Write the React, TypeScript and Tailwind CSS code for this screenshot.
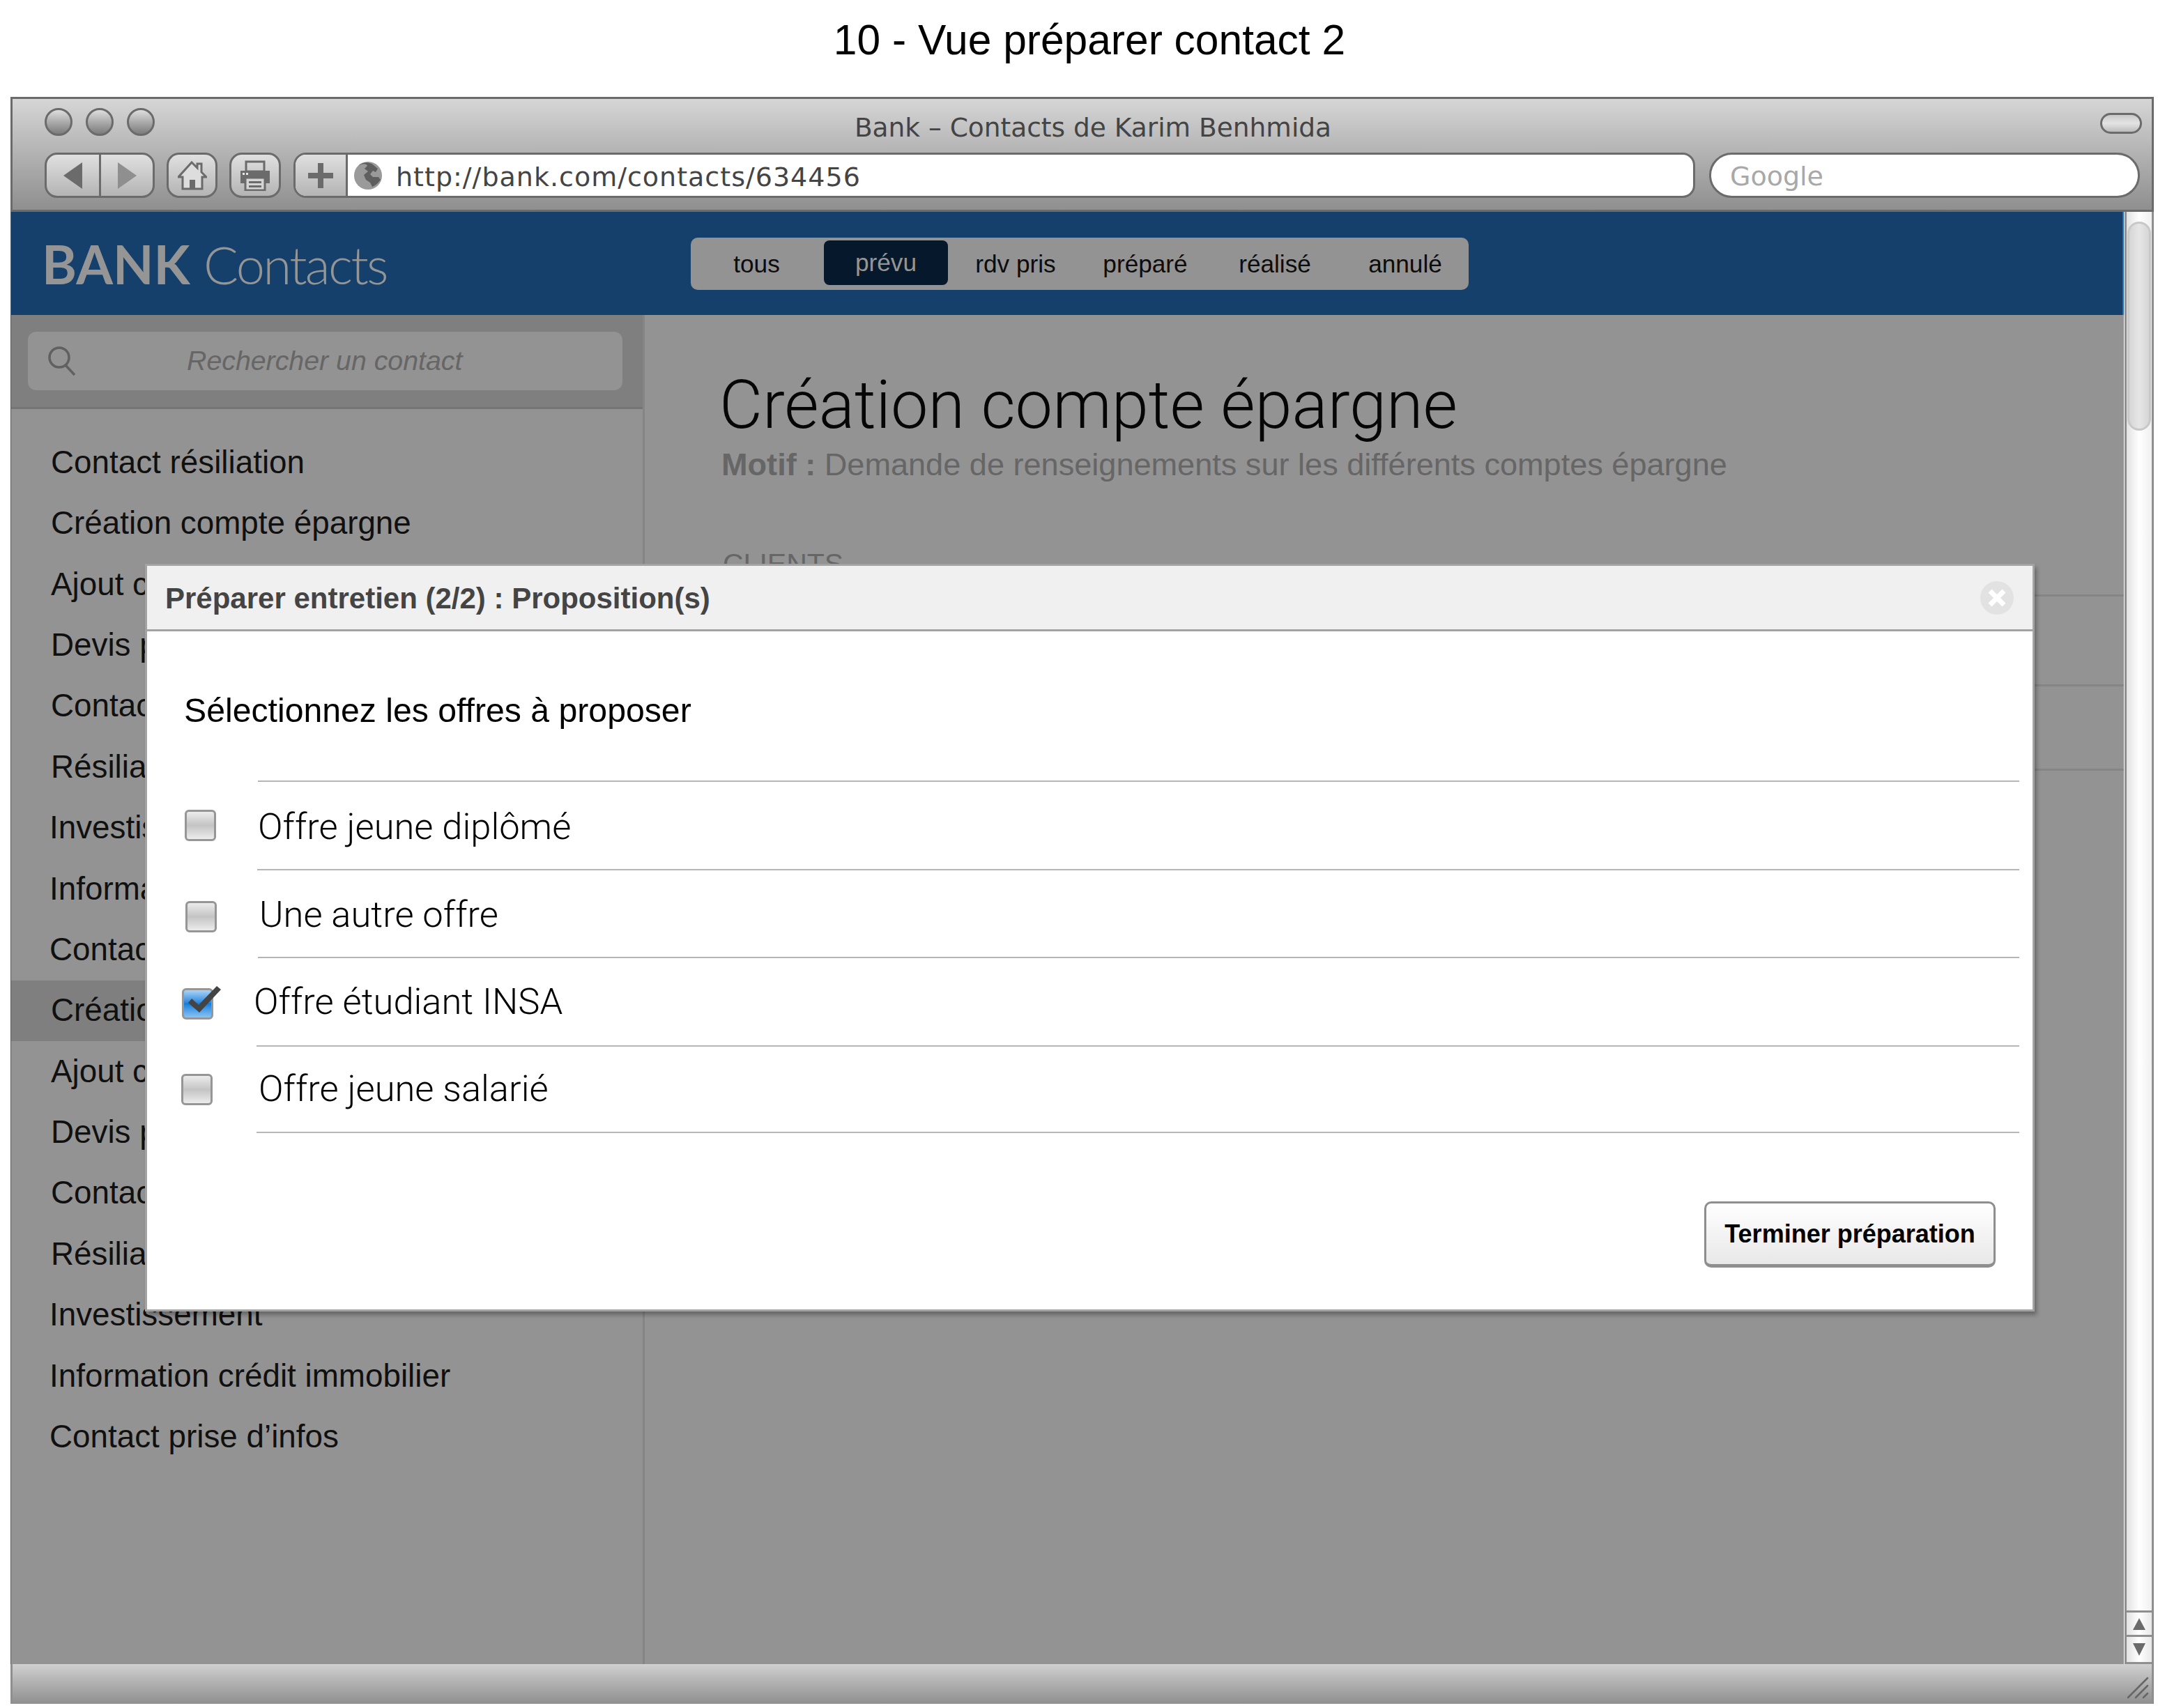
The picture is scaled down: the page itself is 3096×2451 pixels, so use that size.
const sidebarItems = [
  "Contact résiliation",
  "Création compte épargne",
  "Ajout co-titulaire",
  "Devis prêt",
  "Contact",
  "Résiliation",
  "Investissement",
  "Information crédit immobilier",
  "Contact prise d’infos",
  "Création compte épargne",
  "Ajout co-titulaire",
  "Devis prêt",
  "Contact",
  "Résiliation",
  "Investissement",
  "Information crédit immobilier",
  "Contact prise d’infos",
];

const tabs = [
  { label: "tous", cls: "w-[189px]" },
  { label: "prévu", cls: "w-[178px] ml-[2px] bg-[#06192c] text-[#959595] rounded-[8px] h-[64px] -mt-[3px]" },
  { label: "rdv pris", cls: "w-[194px]" },
  { label: "préparé", cls: "w-[178px]" },
  { label: "réalisé", cls: "w-[194px]" },
  { label: "annulé", cls: "w-[180px]" },
];

const indentedLess = [6, 7, 8, 14, 15, 16];

function Check({ checked, cls }: { checked?: boolean; cls: string }) {
  return (
    <div
      className={`relative w-[45px] h-[45px] shrink-0 rounded-[6px] border-[3px] border-[#969696] ${
        checked
          ? "bg-gradient-to-b from-[#a9d4f7] via-[#0a7fdc] to-[#86c3f3]"
          : "bg-gradient-to-b from-[#ececec] via-[#c4c4c4] to-[#ececec]"
      } ${cls}`}
    >
      {checked && (
        <svg className="absolute left-[3px] top-[-9px]" width="50" height="44" viewBox="0 0 50 44">
          <path d="M3 27 L8 21 L18 30 L44 3 L50 8 L19 41 Z" fill="#444444" />
        </svg>
      )}
    </div>
  );
}

function OfferRow({ label, rowCls, boxCls, textCls, checked, lineCls }: { label: string; rowCls: string; boxCls: string; textCls: string; checked?: boolean; lineCls: string }) {
  return (
    <div>
      <div className={`flex items-center ${rowCls}`}>
        <Check checked={checked} cls={boxCls} />
        <span className={`font-['Roboto',sans-serif] font-light text-[52.5px] text-black leading-none ${textCls}`}>{label}</span>
      </div>
      <div className={`h-[2px] bg-[#b5b5b5] ${lineCls}`} />
    </div>
  );
}

export default function App() {
  return (
    <div className="w-[3096px] h-[2451px] bg-white flex flex-col overflow-hidden relative pb-[6px] font-['Liberation_Sans',sans-serif]">
      <div className="h-[139px] shrink-0 pb-[24px] flex items-center justify-center text-[60.5px] text-black pl-[30px]">
        10 - Vue préparer contact 2
      </div>

      <div className="flex-1 ml-[15px] w-[3075px] flex flex-col min-h-0">
        {/* browser chrome */}
        <div className="h-[165px] shrink-0 border-[3px] border-[#6b6b6b] bg-gradient-to-b from-[#d6d6d6] to-[#8f8f8f] pl-[46px] pr-[14px] pt-[13px]">
          <div className="flex items-center h-[40px]">
            <div className="flex gap-[19px]">
              {[0, 1, 2].map((i) => (
                <div key={i} className="w-[40px] h-[40px] rounded-full border-[3px] border-[#6b6b6b] bg-gradient-to-b from-[#dedede] to-[#7c7c7c]" />
              ))}
            </div>
            <div className="flex-1 text-center pr-[99px] pt-[17px] font-['DejaVu_Sans',sans-serif] text-[#444444] text-[37.5px] leading-none">
              Bank – Contacts de Karim Benhmida
            </div>
            <div className="w-[60px] h-[30px] mt-[4px] rounded-full border-[3px] border-[#6b6b6b] bg-gradient-to-b from-[#c9c9c9] via-[#e4e4e4] to-[#bcbcbc]" />
          </div>

          <div className="flex mt-[24px] h-[65px]">
            <div className="w-[158px] flex rounded-[18px] border-[3px] border-[#6b6b6b] bg-gradient-to-b from-[#e0e0e0] to-[#b4b4b4] overflow-hidden">
              <div className="w-[78px] flex items-center justify-center border-r-[3px] border-[#6b6b6b]">
                <svg width="30" height="40" viewBox="0 0 30 40"><path d="M28 1 V39 L1 20 Z" fill="#6b6b6b" /></svg>
              </div>
              <div className="flex-1 flex items-center justify-center">
                <svg width="30" height="40" viewBox="0 0 30 40"><path d="M2 1 V39 L29 20 Z" fill="#8f8f8f" /></svg>
              </div>
            </div>
            <div className="w-[73px] ml-[17px] flex items-center justify-center rounded-[18px] border-[3px] border-[#6b6b6b] bg-gradient-to-b from-[#e0e0e0] to-[#b4b4b4]">
              <svg width="42" height="42" viewBox="0 0 42 42">
                <path d="M1 23 L20 2 L28 10 V4 H34 V16 L41 23 H35 V40 H7 V23 Z" fill="#dddddd" stroke="#6b6b6b" strokeWidth="3" strokeLinejoin="miter" />
                <rect x="17" y="27" width="8" height="12" fill="#6b6b6b" />
              </svg>
            </div>
            <div className="w-[74px] ml-[17px] flex items-center justify-center rounded-[18px] border-[3px] border-[#6b6b6b] bg-gradient-to-b from-[#e0e0e0] to-[#b4b4b4]">
              <svg width="44" height="44" viewBox="0 0 44 44">
                <rect x="9" y="2" width="26" height="14" fill="none" stroke="#6b6b6b" strokeWidth="3" />
                <rect x="1" y="15" width="42" height="18" fill="#6b6b6b" />
                <rect x="4" y="18" width="3" height="3" fill="#e5e5e5" />
                <rect x="9" y="18" width="3" height="3" fill="#e5e5e5" />
                <rect x="8" y="25" width="28" height="18" fill="#d5d5d5" stroke="#6b6b6b" strokeWidth="3" />
                <rect x="13" y="30" width="18" height="3" fill="#6b6b6b" />
                <rect x="13" y="36" width="18" height="3" fill="#6b6b6b" />
              </svg>
            </div>
            <div className="w-[2011px] ml-[18px] flex rounded-[18px] border-[3px] border-[#6b6b6b] bg-white overflow-hidden">
              <div className="w-[75px] shrink-0 flex items-center justify-center border-r-[3px] border-[#6b6b6b] bg-gradient-to-b from-[#e0e0e0] to-[#b4b4b4]">
                <svg width="36" height="36" viewBox="0 0 36 36"><path d="M14 0 H22 V14 H36 V22 H22 V36 H14 V22 H0 V14 H14 Z" fill="#6b6b6b" /></svg>
              </div>
              <div className="flex-1 flex items-center pl-[9px]">
                <svg width="40" height="40" viewBox="0 0 40 40" className="shrink-0">
                  <circle cx="20" cy="20" r="20" fill="#9a9a9a" />
                  <path d="M6 6 C12 2 18 3 19 6 L15 10 L20 14 L14 19 L17 26 L23 30 L26 36 C30 35 35 30 38 26 L35 22 L27 22 L23 18 L27 13 L31 15 L34 10 L28 5 C22 0 12 0 6 6 Z" fill="#5f5f5f" />
                </svg>
                <span className="ml-[20px] pt-[4px] font-['DejaVu_Sans',sans-serif] text-[#444444] text-[38px] tracking-[1px] leading-none">http://bank.com/contacts/634456</span>
              </div>
            </div>
            <div className="w-[618px] ml-[20px] flex items-center rounded-full border-[3px] border-[#6b6b6b] bg-white pl-[27px]">
              <span className="pt-[3px] font-['DejaVu_Sans',sans-serif] text-[#a8a8a8] text-[38px] leading-none">Google</span>
            </div>
          </div>
        </div>

        {/* page */}
        <div className="flex-1 flex min-h-0 relative border-l border-[#5a5a5a] border-r-[3px] border-r-[#8f8f8f]">
          <div className="flex-1 flex flex-col min-w-0 bg-[#939393]">
            <div className="h-[148px] shrink-0 bg-[#14406b] border-r-[2px] border-[#2a6db0] flex items-start pt-[37px]">
              <div className="w-[975px] shrink-0 pl-[44px] leading-none text-[76px] text-[#959595] font-['Lato',sans-serif] whitespace-nowrap">
                <span className="font-bold">BANK</span> <span className="font-light text-[74px] tracking-[-2.6px]">Contacts</span>
              </div>
              <div className="w-[1116px] h-[75px] rounded-[10px] bg-[#939393] flex items-center text-[35.2px] text-[#0c0c0c]">
                {tabs.map((t) => (
                  <div key={t.label} className={`flex items-center justify-center leading-none ${t.cls}`}>{t.label}</div>
                ))}
              </div>
            </div>

            <div className="flex-1 flex min-h-0">
              <div className="w-[909px] shrink-0 border-r-[3px] border-[#858585]">
                <div className="h-[135px] bg-[#7f7f7f] border-b-[3px] border-[#757575] pt-[24px] pl-[24px]">
                  <div className="w-[853px] h-[84px] rounded-[12px] bg-[#939393] flex items-center pl-[28px]">
                    <svg width="42" height="44" viewBox="0 0 42 44" fill="none" stroke="#606060" strokeWidth="3.5">
                      <circle cx="17" cy="17" r="14" />
                      <path d="M26 28 L39 42" />
                    </svg>
                    <span className="ml-[158px] text-[#666666] italic text-[39.3px] leading-none">Rechercher un contact</span>
                  </div>
                </div>
                <div className="pt-[33px]">
                  {sidebarItems.map((s, i) => (
                    <div key={i} className={`h-[87.4px] flex items-center text-[45.8px] text-[#101010] leading-none whitespace-nowrap ${indentedLess.includes(i) ? "pl-[55px]" : "pl-[57px]"} ${i === 9 ? "bg-[#7f7f7f]" : ""}`}>
                      {s}
                    </div>
                  ))}
                </div>
              </div>

              <div className="flex-1 min-w-0 pl-[110px] pt-[82px]">
                <div className="-ml-[3px] font-['Roboto',sans-serif] font-light text-[95.5px] leading-none text-[#060606]">Création compte épargne</div>
                <div className="mt-[14px] text-[45.1px] text-[#666666] leading-none whitespace-nowrap"><span className="font-bold">Motif :</span> Demande de renseignements sur les différents comptes épargne</div>
                <div className="ml-[2px] mt-[100px] text-[41px] text-[#666666] leading-none">CLIENTS</div>
                <div className="-ml-[110px] mt-[23px] h-[3px] bg-[#858585]" />
                <div className="-ml-[110px] mt-[126px] h-[3px] bg-[#858585]" />
                <div className="-ml-[110px] mt-[118px] h-[3px] bg-[#858585]" />
              </div>
            </div>
          </div>

          {/* scrollbar */}
          <div className="w-[40px] shrink-0 border-l border-white bg-[#8f8f8f] pl-[3px] flex flex-col">
            <div className="flex-1 pt-[14px] pl-[1px] bg-gradient-to-r from-[#e2e2e2] via-white to-[#f0f0f0]">
              <div className="w-[34px] h-[300px] rounded-full border-[3px] border-[#c8c8c8] bg-gradient-to-r from-[#d6d6d6] via-[#e6e6e6] to-[#d6d6d6]" />
            </div>
            <div className="h-[32px] mt-[3px] bg-gradient-to-r from-[#e2e2e2] via-white to-[#e8e8e8] flex items-center justify-center">
              <svg width="18" height="17" viewBox="0 0 18 17"><path d="M9 0 L18 17 H0 Z" fill="#6b6b6b" /></svg>
            </div>
            <div className="h-[36px] mt-[3px] mb-[3px] bg-gradient-to-r from-[#e2e2e2] via-white to-[#e8e8e8] flex items-center justify-center">
              <svg width="18" height="18" viewBox="0 0 18 18"><path d="M0 0 H18 L9 18 Z" fill="#6b6b6b" /></svg>
            </div>
          </div>
        </div>

        {/* status bar */}
        <div className="h-[57px] shrink-0 border-x-[3px] border-[#8f8f8f] bg-gradient-to-b from-[#d0d0d0] to-[#8f8f8f] flex justify-end items-end pr-[4px] pb-[7px]">
          <svg width="32" height="32" viewBox="0 0 32 32" stroke="#666666" strokeWidth="2.5" strokeLinecap="round">
            <path d="M2 30 L30 2 M13 30 L30 13 M24 30 L30 24" />
          </svg>
        </div>
      </div>

      {/* modal */}
      <div className="absolute left-[208px] top-[809px] w-[2711px] h-[1073px] bg-white border-[3px] border-[#a3a3a3] shadow-[3px_5px_6px_rgba(0,0,0,0.3)] flex flex-col">
        <div className="h-[94px] shrink-0 bg-[#f0f0f0] border-b-[3px] border-[#a3a3a3] flex items-center justify-between pl-[26px] pr-[27px]">
          <span className="font-bold text-[42px] text-[#444444] leading-none pt-[2px]">Préparer entretien (2/2) : Proposition(s)</span>
          <svg width="48" height="48" viewBox="0 0 48 48">
            <circle cx="24" cy="24" r="24" fill="#e2e2e2" />
            <path d="M14 14 L34 34 M34 14 L14 34" stroke="#ffffff" strokeWidth="7" />
          </svg>
        </div>
        <div className="flex-1 pl-[53px] pr-[19px] pt-[89px]">
          <div className="text-[48.2px] text-black leading-none">Sélectionnez les offres à proposer</div>
          <div className="ml-[106px] mt-[77px] h-[2px] bg-[#b5b5b5]" />
          <OfferRow label="Offre jeune diplômé" rowCls="h-[125px]" boxCls="ml-[1px]" textCls="ml-[60px] mt-[3px]" lineCls="ml-[105px]" />
          <OfferRow label="Une autre offre" rowCls="h-[124px]" boxCls="ml-[2px] mt-[9px]" textCls="ml-[61px] mt-[2px]" lineCls="ml-[106px]" />
          <OfferRow label="Offre étudiant INSA" rowCls="h-[125px]" checked boxCls="-ml-[3px] mt-[6px]" textCls="ml-[58px]" lineCls="ml-[104px]" />
          <OfferRow label="Offre jeune salarié" rowCls="h-[122px]" boxCls="-ml-[4px]" textCls="ml-[66px] -mt-[1px]" lineCls="ml-[104px]" />
          <div className="flex justify-end pr-[34px] mt-[98px]">
            <div className="w-[418px] h-[95px] rounded-[10px] border-[3px] border-b-[5px] border-[#8e8e8e] bg-gradient-to-b from-white to-[#e8e8e8] flex items-center justify-center text-[36px] font-bold text-black leading-none">
              Terminer préparation
            </div>
          </div>
        </div>
      </div>
    </div>
  );
}
